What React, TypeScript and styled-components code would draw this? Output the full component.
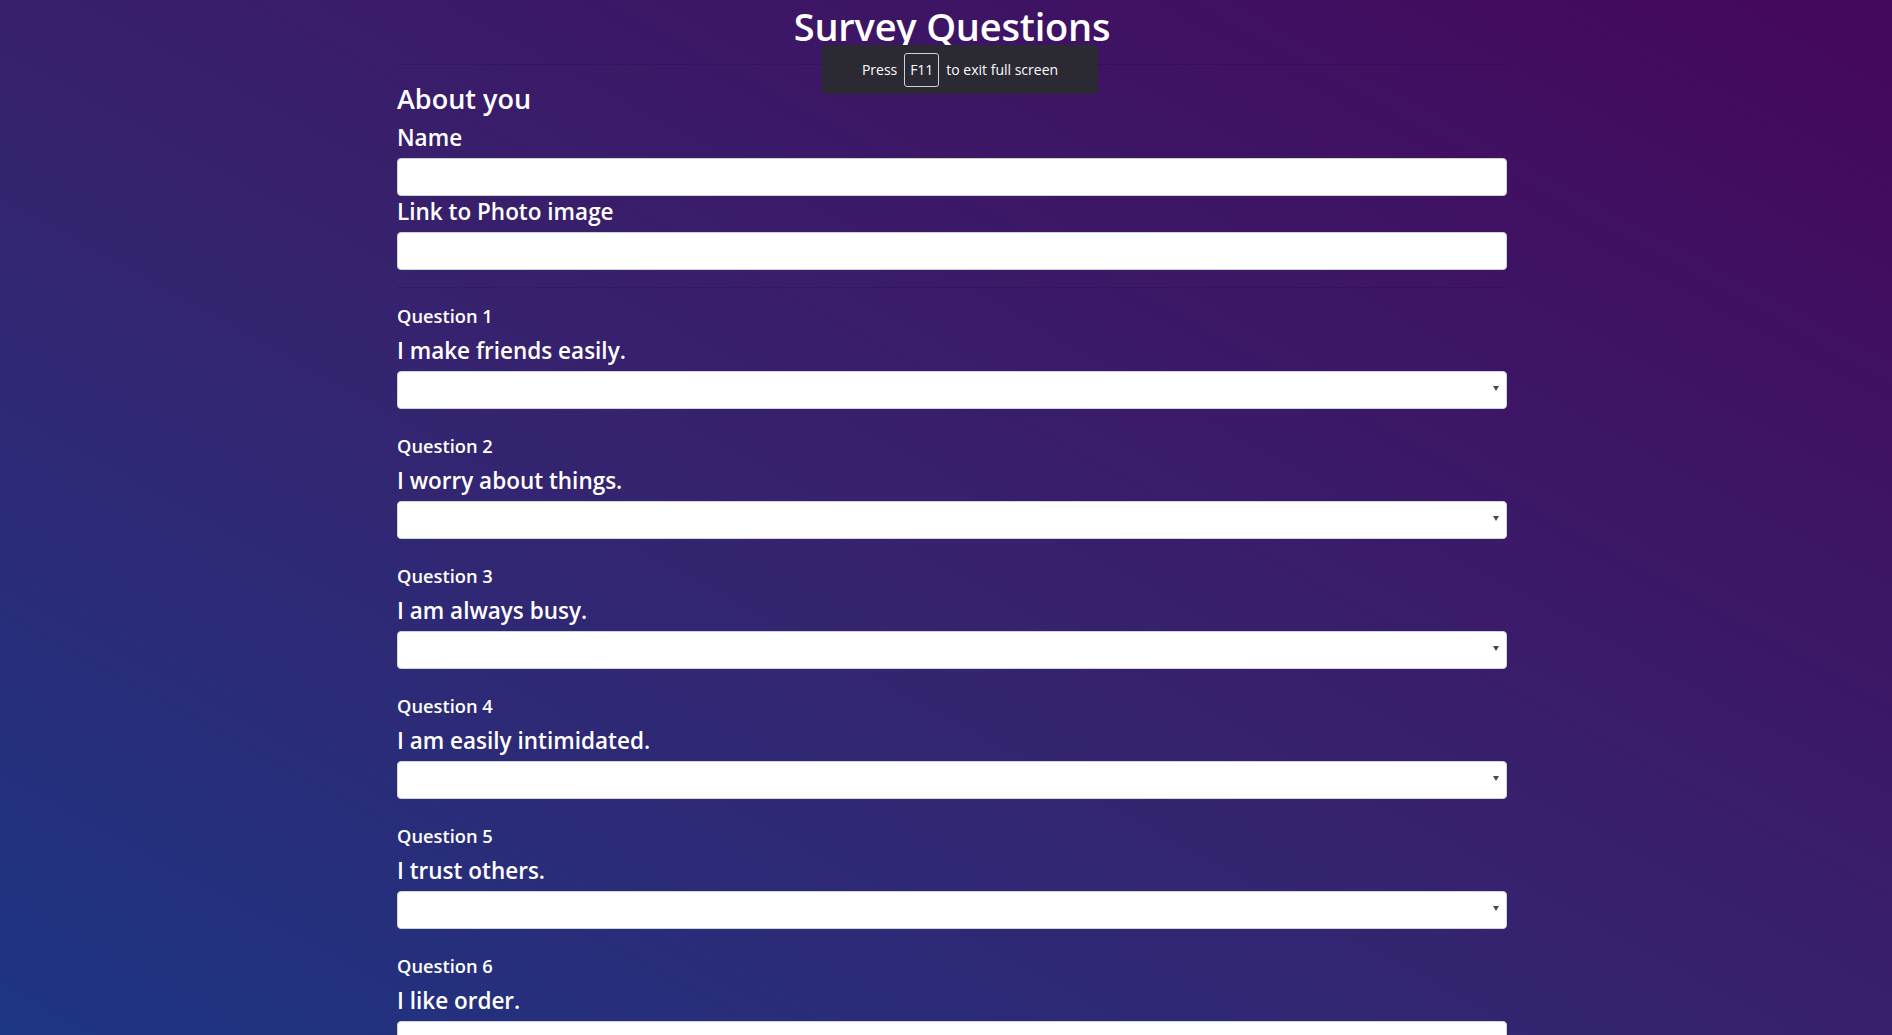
import React from "react";
import styled, { createGlobalStyle } from "styled-components";

const Global = createGlobalStyle`
  html, body { margin: 0; padding: 0; }
  body {
    min-height: 100vh;
    font-family: "Open Sans", "Noto Sans", Arial, sans-serif;
    color: #fff;
    background: linear-gradient(to top right, #1d3683 0%, #36236f 45%, #45075b 100%);
    background-attachment: fixed;
    overflow: hidden;
  }
  #root { min-height: 100vh; }
`;

const Page = styled.div`
  height: 1035px;
  overflow: hidden;
  position: relative;
`;

const Container = styled.div`
  width: 1110px;
  margin-left: calc(50% - 549px);
  display: flex;
  flex-direction: column;
`;

const Title = styled.h1`
  margin: 0;
  padding-top: 2px;
  font-size: 38px;
  line-height: 48px;
  font-weight: 600;
  text-align: center;
  letter-spacing: -0.2px;
`;

const Rule = styled.hr<{ $top: number }>`
  margin: ${(p) => p.$top}px 0 0;
  border: 0;
  border-top: 1px solid rgba(0, 0, 0, 0.12);
  height: 0;
`;

const SectionHeading = styled.h3`
  margin: 17px 0 0;
  font-size: 27px;
  line-height: 34px;
  font-weight: 600;
`;

const FieldLabel = styled.h4<{ $top: number }>`
  margin: ${(p) => p.$top}px 0 0;
  font-size: 22.5px;
  line-height: 29px;
  font-weight: 600;
`;

const QuestionNumber = styled.h5`
  margin: 0;
  font-size: 18.3px;
  line-height: 24px;
  font-weight: 600;
`;

const TextInput = styled.input`
  display: block;
  box-sizing: border-box;
  width: 100%;
  height: 38px;
  margin-top: 6px;
  padding: 6px 12px;
  font-size: 16px;
  background: #fff;
  border: 1px solid #ced4da;
  border-radius: 4px;
`;

const SelectWrap = styled.div`
  position: relative;
  margin-top: 6px;
`;

const Select = styled.select`
  display: block;
  box-sizing: border-box;
  width: 100%;
  height: 38px;
  padding: 6px 12px;
  font-size: 16px;
  background: #fff;
  color: #495057;
  border: 1px solid #ced4da;
  border-radius: 4px;
  appearance: none;
  -webkit-appearance: none;
`;

const Caret = styled.span`
  position: absolute;
  right: 8px;
  top: 15px;
  width: 0;
  height: 0;
  border-left: 3px solid transparent;
  border-right: 3px solid transparent;
  border-top: 5px solid #48484e;
  pointer-events: none;
`;

const QuestionBlock = styled.div<{ $first: boolean }>`
  display: flex;
  flex-direction: column;
  margin-top: ${(p) => (p.$first ? 16 : 25)}px;
`;

const Notice = styled.div`
  position: absolute;
  left: 822px;
  top: 45px;
  width: 276px;
  height: 49px;
  box-sizing: border-box;
  background: #2b2a33;
  border-radius: 4px;
  display: flex;
  align-items: center;
  justify-content: center;
  gap: 7px;
  font-family: "Open Sans", "Noto Sans", Arial, sans-serif;
  font-size: 14px;
  color: #fbfbfe;
`;

const Key = styled.span`
  display: inline-flex;
  align-items: center;
  justify-content: center;
  width: 35px;
  height: 34px;
  box-sizing: border-box;
  border: 1px solid #d0d0d7;
  border-radius: 3px;
`;

const questions = [
  "I make friends easily.",
  "I worry about things.",
  "I am always busy.",
  "I am easily intimidated.",
  "I trust others.",
  "I like order.",
  "I love to help others.",
];

export default function App() {
  return (
    <Page>
      <Global />
      <Container>
        <Title>Survey Questions</Title>
        <Rule $top={14} />
        <SectionHeading>About you</SectionHeading>
        <FieldLabel $top={7}>Name</FieldLabel>
        <TextInput type="text" />
        <FieldLabel $top={1}>Link to Photo image</FieldLabel>
        <TextInput type="text" />
        <Rule $top={17} />
        {questions.map((q, i) => (
          <QuestionBlock key={i} $first={i === 0}>
            <QuestionNumber>Question {i + 1}</QuestionNumber>
            <FieldLabel $top={8}>{q}</FieldLabel>
            <SelectWrap>
              <Select defaultValue="">
                <option value=""></option>
                <option value="1">1 (Strongly Disagree)</option>
                <option value="2">2</option>
                <option value="3">3</option>
                <option value="4">4</option>
                <option value="5">5 (Strongly Agree)</option>
              </Select>
              <Caret />
            </SelectWrap>
          </QuestionBlock>
        ))}
      </Container>
      <Notice>
        <span>Press</span>
        <Key>F11</Key>
        <span>to exit full screen</span>
      </Notice>
    </Page>
  );
}
